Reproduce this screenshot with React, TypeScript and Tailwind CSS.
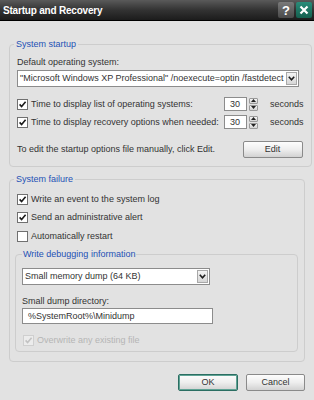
import React from "react";

const ui = "font-['Liberation_Sans','Arial',sans-serif] text-[9px] leading-[13px] text-[#333333] whitespace-nowrap";

function Check({ checked, disabled }: { checked?: boolean; disabled?: boolean }) {
  return (
    <span
      className={`inline-flex h-[11px] w-[11px] shrink-0 items-center justify-center border ${
        disabled ? "border-[#cfcfcf] bg-[#ececec]" : "border-[#707070] bg-white"
      }`}
    >
      {checked && (
        <svg width="9" height="9" viewBox="0 0 9 9">
          <path d="M1.6 4.4 L3.6 6.6 L7.6 1.8" fill="none" stroke={disabled ? "#c2c2c2" : "#1a1a1a"} strokeWidth="1.6" />
        </svg>
      )}
    </span>
  );
}

function Chevron() {
  return (
    <svg width="7" height="5" viewBox="0 0 7 5">
      <path d="M0.8 0.8 L3.5 3.8 L6.2 0.8" fill="none" stroke="#1e1e1e" strokeWidth="1.6" />
    </svg>
  );
}

function Combo({ text, width }: { text: string; width: string }) {
  return (
    <div className={`flex h-[17px] items-stretch border border-[#8c8c8c] bg-white ${width}`}>
      <div className="flex-1 overflow-hidden pl-[2px] leading-[15px]">{text}</div>
      <div className="m-[1px] flex w-[11px] items-center justify-center border border-[#a8a8a8] bg-gradient-to-b from-[#f4f4f4] to-[#d6d6d6]">
        <Chevron />
      </div>
    </div>
  );
}

function Spinner() {
  return (
    <div className="flex h-[14px] items-center">
      <div className="h-[14px] w-[23px] border border-[#8c8c8c] bg-white pl-[5px] leading-[12px]">30</div>
      <div className="ml-[2px] flex h-[13px] w-[9px] flex-col gap-[1px]">
        <div className="flex flex-1 items-center justify-center rounded-[1px] border border-[#9a9a9a] bg-gradient-to-b from-[#f6f6f6] to-[#d4d4d4]">
          <svg width="5" height="3" viewBox="0 0 5 3">
            <path d="M0 3 L2.5 0 L5 3 Z" fill="#222" />
          </svg>
        </div>
        <div className="flex flex-1 items-center justify-center rounded-[1px] border border-[#9a9a9a] bg-gradient-to-b from-[#f6f6f6] to-[#d4d4d4]">
          <svg width="5" height="3" viewBox="0 0 5 3">
            <path d="M0 0 L2.5 3 L5 0 Z" fill="#222" />
          </svg>
        </div>
      </div>
    </div>
  );
}

function Button({ label, primary, width }: { label: string; primary?: boolean; width: string }) {
  return (
    <div
      className={`flex h-[17px] items-center justify-center rounded-[2px] border bg-gradient-to-b from-[#fdfdfd] via-[#eeeeee] to-[#d2d2d2] ${width} ${
        primary ? "border-[#2b6e62] shadow-[inset_0_0_0_1px_#5fa395]" : "border-[#8a8a8a]"
      }`}
    >
      {label}
    </div>
  );
}

export default function App() {
  return (
    <div className={`flex h-[400px] w-[314px] flex-col bg-[#e2e2e2] ${ui}`}>
      {/* title bar */}
      <div className="flex h-[21px] items-center border-b border-black bg-gradient-to-b from-[#5a5a5a] via-[#333333] to-[#1c1c1c] pl-[3px] pr-[2px]">
        <div className="flex-1 text-[10px] font-bold tracking-[-0.2px] text-white">Startup and Recovery</div>
        <div className="flex h-[16px] w-[16px] items-center justify-center rounded-[2px] bg-gradient-to-b from-[#7a7a7a] to-[#4a4a4a] text-[13px] font-bold text-white">
          ?
        </div>
        <div className="ml-[2px] flex h-[16px] w-[16px] items-center justify-center rounded-[2px] bg-gradient-to-b from-[#2a8d7a] to-[#15604f]">
          <svg width="10" height="10" viewBox="0 0 10 10">
            <path d="M1.5 1.5 L8.5 8.5 M8.5 1.5 L1.5 8.5" stroke="white" strokeWidth="2.2" />
          </svg>
        </div>
      </div>

      {/* System startup */}
      <fieldset className="mx-[9px] mt-[17px] rounded-[4px] border border-[#cdcdcd] px-[7px] pb-[8px]">
        <legend className="-ml-[3px] px-[2px] text-[#2451b5]">System startup</legend>
        <div className="mt-[5px]">Default operating system:</div>
        <Combo
          width="w-[282px] mt-[1px]"
          text={'"Microsoft Windows XP Professional" /noexecute=optin /fastdetect'}
        />
        <div className="mt-[9px] flex h-[16px] items-center">
          <div className="flex w-[207px] items-center gap-[3px]">
            <Check checked />
            <span>Time to display list of operating systems:</span>
          </div>
          <Spinner />
          <span className="ml-[12px]">seconds</span>
        </div>
        <div className="mt-[2px] flex h-[16px] items-center">
          <div className="flex w-[207px] items-center gap-[3px]">
            <Check checked />
            <span>Time to display recovery options when needed:</span>
          </div>
          <Spinner />
          <span className="ml-[12px]">seconds</span>
        </div>
        <div className="mt-[11px] flex items-center justify-between">
          <span>To edit the startup options file manually, click Edit.</span>
          <Button label="Edit" width="w-[60px] mr-[1px]" />
        </div>
      </fieldset>

      {/* System failure */}
      <fieldset className="mx-[9px] mt-[6px] rounded-[4px] border border-[#cdcdcd] px-[5px] pb-[9px]">
        <legend className="-ml-[1px] px-[2px] text-[#2451b5]">System failure</legend>
        <div className="ml-[2px] mt-[5px] flex h-[16px] items-center gap-[3px]">
          <Check checked />
          <span>Write an event to the system log</span>
        </div>
        <div className="ml-[2px] mt-[2px] flex h-[16px] items-center gap-[3px]">
          <Check checked />
          <span>Send an administrative alert</span>
        </div>
        <div className="ml-[2px] mt-[3px] flex h-[16px] items-center gap-[3px]">
          <Check />
          <span>Automatically restart</span>
        </div>

        <fieldset className="mt-[4px] mr-[1px] rounded-[4px] border border-[#cdcdcd] px-[6px] pb-[3px]">
          <legend className="px-[1px] text-[#2451b5]">Write debugging information</legend>
          <Combo width="w-[188px] mt-[7px]" text="Small memory dump (64 KB)" />
          <div className="mt-[10px]">Small dump directory:</div>
          <div className="h-[16px] w-[191px] border border-[#8c8c8c] bg-white pl-[5px] leading-[14px]">
            %SystemRoot%\Minidump
          </div>
          <div className="ml-[1px] mt-[8px] flex h-[16px] items-center gap-[3px] text-[#b5b5b5]">
            <Check checked disabled />
            <span>Overwrite any existing file</span>
          </div>
        </fieldset>
      </fieldset>

      <div className="mt-[12px] flex justify-end gap-[8px] pr-[9px]">
        <Button label="OK" primary width="w-[60px]" />
        <Button label="Cancel" width="w-[59px]" />
      </div>
    </div>
  );
}
